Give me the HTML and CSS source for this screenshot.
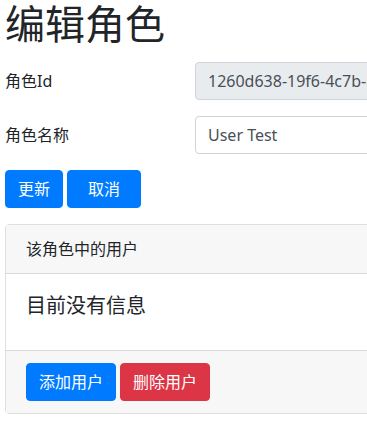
FILE: index.html
```
<!DOCTYPE html>
<html lang="zh">
<head>
    <meta charset="UTF-8">
    <title>编辑角色</title>
    <link rel="stylesheet" href="styles.css">
</head>
<body>
    <div class="page">
        <h1 class="title">编辑角色</h1>
        <form class="role-form">
            <div class="form-row">
                <label class="form-label">角色Id</label>
                <input class="form-input" type="text" value="1260d638-19f6-4c7b-8a3e-2f1d9c0b7e55" disabled>
            </div>
            <div class="form-row">
                <label class="form-label">角色名称</label>
                <input class="form-input" type="text" value="User Test">
            </div>
            <div class="actions">
                <button class="btn btn-primary" type="button">更新</button>
                <a class="btn btn-primary btn-wide" href="#">取消</a>
            </div>
        </form>
        <div class="card">
            <div class="card-header">该角色中的用户</div>
            <div class="card-body">
                <h5 class="card-title">目前没有信息</h5>
            </div>
            <div class="card-footer">
                <a class="btn btn-primary" href="#">添加用户</a>
                <a class="btn btn-danger" href="#">删除用户</a>
            </div>
        </div>
    </div>
</body>
</html>
```
FILE: styles.css
```
* {
    margin: 0;
    padding: 0;
    box-sizing: border-box;
}
html, body {
    overflow: hidden;
}
body {
    font-family: "Noto Sans", "Noto Sans CJK SC", sans-serif;
    font-size: 16px;
    line-height: 1.5;
    color: #212529;
    background-color: #fff;
}
.page {
    width: 600px;
    padding: 0 5px;
}
.title {
    font-size: 40px;
    font-weight: 400;
    line-height: 1.2;
    margin-bottom: 14px;
}
.form-row {
    display: flex;
    align-items: center;
    margin-bottom: 16px;
}
.form-label {
    width: 190px;
    flex: none;
}
.form-input {
    flex: 1;
    height: 38px;
    padding: 6px 12px;
    font: inherit;
    color: #495057;
    background-color: #fff;
    border: 1px solid #ced4da;
    border-radius: 4px;
}
.form-input:disabled {
    background-color: #e9ecef;
}
.actions {
    display: flex;
    gap: 4px;
    margin-bottom: 16px;
}
.btn {
    display: inline-block;
    height: 38px;
    padding: 6px 12px;
    font: inherit;
    color: #fff;
    text-decoration: none;
    border: 1px solid transparent;
    border-radius: 4px;
    cursor: pointer;
}
.btn-wide {
    padding: 6px 20px;
}
.btn-primary {
    background-color: #007bff;
    border-color: #007bff;
}
.btn-danger {
    background-color: #dc3545;
    border-color: #dc3545;
}
.card {
    border: 1px solid rgba(0, 0, 0, .125);
    border-radius: 4px;
}
.card-header {
    padding: 12px 20px;
    background-color: #f7f7f7;
    border-bottom: 1px solid rgba(0, 0, 0, .125);
}
.card-body {
    padding: 20px;
}
.card-title {
    font-size: 20px;
    font-weight: 400;
    line-height: 1.2;
    margin-bottom: 12px;
}
.card-footer {
    display: flex;
    gap: 4px;
    padding: 12px 20px;
    background-color: #f7f7f7;
    border-top: 1px solid rgba(0, 0, 0, .125);
}
```
